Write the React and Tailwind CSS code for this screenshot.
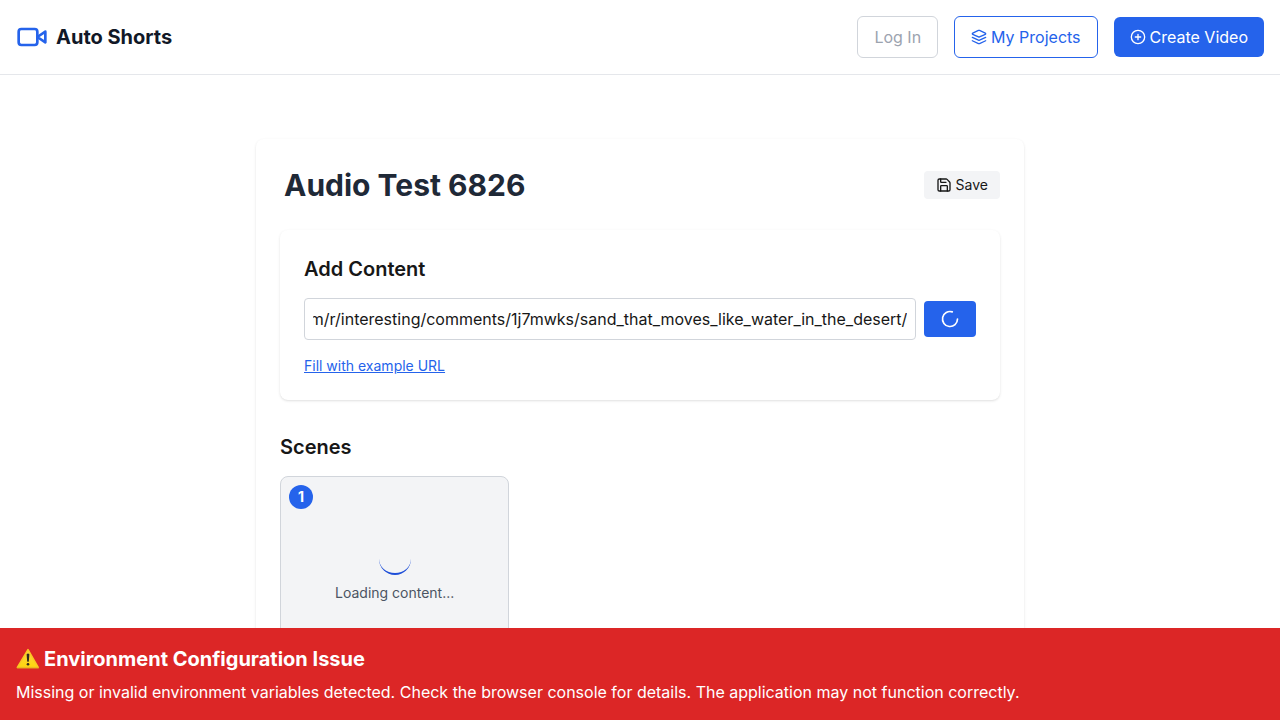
import { useLayoutEffect, useRef, useState } from "react";

const EXAMPLE_URL =
  "https://www.reddit.com/r/interesting/comments/1j7mwks/sand_that_moves_like_water_in_the_desert/";

function VideoIcon() {
  return (
    <svg className="size-8 text-[#2563eb]" viewBox="0 0 24 24" fill="none" stroke="currentColor" strokeWidth="2" strokeLinecap="round" strokeLinejoin="round" aria-hidden="true">
      <path d="m22 8-6 4 6 4V8Z" />
      <rect width="14" height="12" x="2" y="6" rx="2" ry="2" />
    </svg>
  );
}

function LayersIcon() {
  return (
    <svg className="size-4" viewBox="0 0 24 24" fill="none" stroke="currentColor" strokeWidth="2" strokeLinecap="round" strokeLinejoin="round" aria-hidden="true">
      <path d="m12.83 2.18a2 2 0 0 0-1.66 0L2.6 6.08a1 1 0 0 0 0 1.83l8.58 3.91a2 2 0 0 0 1.66 0l8.58-3.9a1 1 0 0 0 0-1.83Z" />
      <path d="m22 17.65-9.17 4.16a2 2 0 0 1-1.66 0L2 17.65" />
      <path d="m22 12.65-9.17 4.16a2 2 0 0 1-1.66 0L2 12.65" />
    </svg>
  );
}

function PlusCircleIcon() {
  return (
    <svg className="size-4" viewBox="0 0 24 24" fill="none" stroke="currentColor" strokeWidth="2" strokeLinecap="round" strokeLinejoin="round" aria-hidden="true">
      <circle cx="12" cy="12" r="10" />
      <path d="M8 12h8M12 8v8" />
    </svg>
  );
}

function SaveIcon() {
  return (
    <svg className="size-4" viewBox="0 0 24 24" fill="none" stroke="currentColor" strokeWidth="2" strokeLinecap="round" strokeLinejoin="round" aria-hidden="true">
      <path d="M15.2 3a2 2 0 0 1 1.4.6l3.8 3.8a2 2 0 0 1 .6 1.4V19a2 2 0 0 1-2 2H5a2 2 0 0 1-2-2V5a2 2 0 0 1 2-2z" />
      <path d="M17 21v-7a1 1 0 0 0-1-1H8a1 1 0 0 0-1 1v7" />
      <path d="M7 3v4a1 1 0 0 0 1 1h7" />
    </svg>
  );
}

function LoaderIcon() {
  return (
    <svg className="size-5" viewBox="0 0 24 24" fill="none" stroke="currentColor" strokeWidth="2" strokeLinecap="round" aria-hidden="true">
      <path d="M21 12a9 9 0 1 1-6.219-8.56" />
    </svg>
  );
}

function WarningIcon() {
  return (
    <svg className="size-6" viewBox="0 0 24 24" aria-hidden="true">
      <defs>
        <linearGradient id="warning-fill" x1="0" y1="0" x2="0" y2="1">
          <stop offset="0" stopColor="#fbd04a" />
          <stop offset="1" stopColor="#ffd60a" />
        </linearGradient>
      </defs>
      <path d="M12 2.6 22.2 20.4H1.4Z" fill="url(#warning-fill)" stroke="#f9c822" strokeWidth="1.6" strokeLinejoin="round" />
      <path d="M1.2 20.9h21.4" stroke="#dba81c" strokeWidth="0.7" strokeLinecap="round" />
      <path d="M10.6 7.2q1.4-1.2 2.8 0l-.6 7.2q-.8.8-1.6 0Z" fill="#2f2a1c" />
      <circle cx="12" cy="17.2" r="1.3" fill="#2f2a1c" />
    </svg>
  );
}

function Header() {
  return (
    <header className="flex items-center justify-between border-b border-[#e5e7eb] p-4">
      <a href="#" className="flex items-center gap-2">
        <VideoIcon />
        <span className="text-xl/[30px] font-bold text-[#111827]">Auto Shorts</span>
      </a>
      <nav className="flex items-center gap-4">
        <button disabled className="rounded-md border border-[#d1d5db] px-4 py-2 text-[#9ca3af]">
          Log In
        </button>
        <a href="#projects" className="flex items-center gap-1 rounded-md border border-[#2563eb] px-4 py-2 text-[#2563eb]">
          <LayersIcon />
          My Projects
        </a>
        <a href="#create" className="flex items-center gap-1 rounded-md bg-[#2563eb] px-4 py-2 text-white">
          <PlusCircleIcon />
          Create Video
        </a>
      </nav>
    </header>
  );
}

function AddContent() {
  const [url, setUrl] = useState(EXAMPLE_URL);
  const inputRef = useRef(null);

  useLayoutEffect(() => {
    const input = inputRef.current;
    const showEnd = () => {
      input.scrollLeft = input.scrollWidth;
    };
    showEnd();
    document.fonts?.ready.then(showEnd);
  }, []);

  return (
    <section className="rounded-lg bg-white p-6 shadow">
      <h2 className="mb-3.5 text-xl/[30px] font-semibold">Add Content</h2>
      <div className="flex items-center gap-2">
        <input
          ref={inputRef}
          type="text"
          aria-label="Content URL"
          value={url}
          onChange={(e) => setUrl(e.target.value)}
          className="min-w-0 flex-1 rounded border border-[#d1d5db] p-2"
        />
        <button aria-label="Adding content" className="rounded bg-[#2563eb] px-4 py-2 text-white">
          <LoaderIcon />
        </button>
      </div>
      <button onClick={() => setUrl(EXAMPLE_URL)} className="mt-4 block text-sm text-[#2563eb] underline">
        Fill with example URL
      </button>
    </section>
  );
}

function SceneCard({ number }) {
  return (
    <li className="relative flex flex-col overflow-hidden rounded-lg border border-[#d1d5db] bg-[#f3f4f6]">
      <span className="absolute top-2 left-2 flex size-6 items-center justify-center rounded-full bg-[#2563eb] text-sm font-bold text-white">
        {number}
      </span>
      <div className="flex h-48 flex-col items-center justify-center gap-2">
        <div className="size-8 rounded-full border-b-2 border-[#1d4ed8]" />
        <p className="text-sm text-[#4b5563]">Loading content...</p>
      </div>
    </li>
  );
}

export default function App() {
  return (
    <div className="min-h-screen bg-white font-[Inter,sans-serif] text-[#171717]">
      <Header />
      <main className="px-4 pt-16">
        <div className="mx-auto max-w-3xl rounded-lg bg-white p-6 shadow-sm">
          <div className="mb-6 flex min-h-[43px] items-center justify-between">
            <h1 className="px-1 text-3xl font-bold text-[#1f2937]">Audio Test 6826</h1>
            <button className="flex items-center gap-1 rounded bg-[#f3f4f6] px-3 py-1 text-sm">
              <SaveIcon />
              Save
            </button>
          </div>
          <AddContent />
          <section className="mt-8">
            <h2 className="mb-3.5 text-xl/[30px] font-semibold">Scenes</h2>
            <ul className="grid grid-cols-3 gap-4">
              <SceneCard number={1} />
            </ul>
          </section>
        </div>
      </main>
      <div role="alert" className="fixed inset-x-0 bottom-0 bg-[#dc2626] p-4 text-white">
        <h2 className="mb-1.5 flex items-center gap-1 text-xl/[30px] font-bold">
          <WarningIcon />
          Environment Configuration Issue
        </h2>
        <p>Missing or invalid environment variables detected. Check the browser console for details. The application may not function correctly.</p>
      </div>
    </div>
  );
}
